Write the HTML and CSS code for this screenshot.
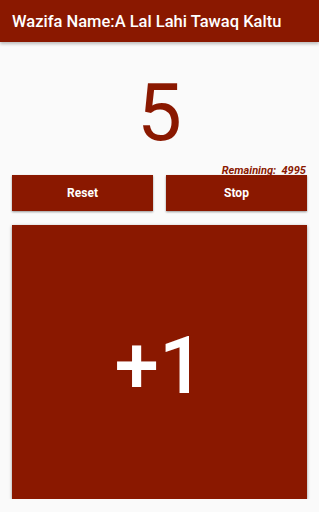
FILE: index.html
```html
<!DOCTYPE html>
<html lang="en">
<head>
    <meta charset="UTF-8">
    <meta name="viewport" content="width=device-width, initial-scale=1.0">
    <title>Wazifa Counter</title>
    <link rel="stylesheet" href="styles.css">
</head>
<body>
<div class="toolbar">Wazifa Name:A Lal Lahi Tawaq Kaltu</div>

<div class="content">
    <div class="count" id="count">5</div>
    <div class="remaining">Remaining:&nbsp; <span id="remaining">4995</span></div>

    <div class="actions">
        <button class="action-btn" onclick="resetCount()">Reset</button>
        <button class="action-btn">Stop</button>
    </div>

    <button class="plus-btn" onclick="addOne()">+1</button>
</div>

<script>
    let count = 5;
    const total = 5000;

    function render() {
        document.getElementById('count').textContent = count;
        document.getElementById('remaining').textContent = total - count;
    }

    function addOne() {
        count++;
        render();
    }

    function resetCount() {
        count = 0;
        render();
    }
</script>
</body>
</html>
```

FILE: styles.css
```css
body {
    margin: 0;
    padding: 0;
    background-color: #fafafa;
    font-family: Roboto, "Liberation Sans", sans-serif;
}

.toolbar {
    height: 42px;
    display: flex;
    align-items: center;
    padding-left: 12px;
    background-color: #8a1800;
    color: #fff;
    font-size: 16.5px;
    font-weight: 500;
    box-shadow: 0 2px 3px rgba(0, 0, 0, 0.25);
}

.content {
    padding: 0 12px;
}

.count {
    margin-top: 31px;
    margin-bottom: -1px;
    font-size: 80px;
    line-height: 80px;
    text-align: center;
    color: #8a1800;
}

.remaining {
    margin-top: 13px;
    margin-bottom: -2px;
    padding-right: 1px;
    height: 12px;
    font-size: 11px;
    line-height: 12px;
    font-weight: bold;
    font-style: italic;
    text-align: right;
    color: #8a1800;
}

.actions {
    display: grid;
    grid-template-columns: 1fr 1fr;
    gap: 13px;
}

.action-btn {
    position: relative;
    height: 36px;
    border: none;
    border-radius: 0;
    background-color: #8a1800;
    color: #fff;
    font-family: Roboto, "Liberation Sans", sans-serif;
    font-size: 12px;
    font-weight: bold;
    box-shadow: 0 1px 2px rgba(0, 0, 0, 0.4);
    cursor: pointer;
}

.plus-btn {
    display: block;
    width: 100%;
    height: 274px;
    margin-top: 14px;
    padding-top: 8px;
    border: none;
    border-radius: 0;
    background-color: #8a1800;
    color: #fff;
    font-family: Roboto, "Liberation Sans", sans-serif;
    font-size: 80px;
    font-weight: 500;
    box-shadow: 0 1px 3px rgba(0, 0, 0, 0.4);
    cursor: pointer;
}
```
